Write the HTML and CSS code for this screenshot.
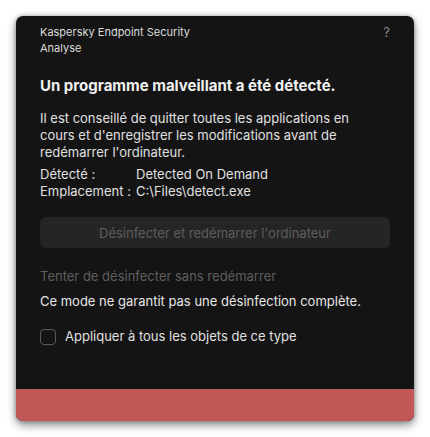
FILE: index.html
```html
<!DOCTYPE html>
<html lang="fr">
<head>
<meta charset="utf-8">
<link rel="stylesheet" href="styles.css">
</head>
<body>
<div class="window">
  <div class="content">
    <div class="header">
      <div class="app">
        <div>Kaspersky Endpoint Security</div>
        <div>Analyse</div>
      </div>
      <div class="help">?</div>
    </div>
    <h1 class="title">Un programme malveillant a été détecté.</h1>
    <p class="desc">Il est conseillé de quitter toutes les applications en cours et d'enregistrer les modifications avant de redémarrer l'ordinateur.</p>
    <div class="details">
      <span class="label">Détecté :</span><span class="value">Detected On Demand</span>
      <span class="label">Emplacement :</span><span class="value">C:\Files\detect.exe</span>
    </div>
    <button class="primary" disabled>Désinfecter et redémarrer l'ordinateur</button>
    <div class="link">Tenter de désinfecter sans redémarrer</div>
    <div class="note">Ce mode ne garantit pas une désinfection complète.</div>
    <label class="check"><span class="box"></span><span>Appliquer à tous les objets de ce type</span></label>
  </div>
  <div class="footer"></div>
</div>
</body>
</html>
```
FILE: styles.css
```css
html, body {
  margin: 0;
  padding: 0;
  background: #ffffff;
}
body {
  font-family: Inter, "Noto Sans", sans-serif;
  padding: 16px;
  width: 398px;
}
.window {
  width: 398px;
  height: 405px;
  background: #141414;
  border-radius: 7px;
  overflow: hidden;
  display: flex;
  flex-direction: column;
  box-shadow: 0 4px 10px rgba(0,0,0,0.45), 0 0 4px rgba(0,0,0,0.3);
}
.content {
  flex: 1;
  padding: 8px 24px 0 24px;
  color: #e6e6e6;
}
.header {
  display: flex;
  justify-content: space-between;
  font-size: 11px;
  line-height: 16px;
  color: #dcdcdc;
}
.help {
  color: #8a8a8a;
  font-size: 13px;
}
.title {
  margin: 20px 0 0 0;
  font-size: 15px;
  line-height: 20px;
  font-weight: 700;
  color: #f0f0f0;
}
.desc {
  margin: 14px 0 0 0;
  max-width: 340px;
  font-size: 13px;
  line-height: 17px;
  color: #e0e0e0;
}
.details {
  display: grid;
  grid-template-columns: 96px 1fr;
  margin-top: 5px;
  font-size: 13px;
  line-height: 17px;
  color: #e0e0e0;
}
.primary {
  display: block;
  width: 100%;
  height: 31px;
  margin-top: 17px;
  border: none;
  border-radius: 6px;
  background: #252525;
  color: #5e5e5e;
  font-family: inherit;
  font-size: 13px;
}
.link {
  margin-top: 20px;
  font-size: 13px;
  line-height: 17px;
  color: #5e5e5e;
}
.note {
  margin-top: 8px;
  font-size: 13px;
  line-height: 17px;
  color: #e6e6e6;
}
.check {
  display: flex;
  align-items: center;
  gap: 9px;
  margin-top: 18px;
  font-size: 13px;
  line-height: 17px;
  color: #e0e0e0;
}
.box {
  width: 14px;
  height: 14px;
  border: 1px solid #5a5a5a;
  border-radius: 4px;
}
.footer {
  height: 32px;
  background: #c15757;
}
```
